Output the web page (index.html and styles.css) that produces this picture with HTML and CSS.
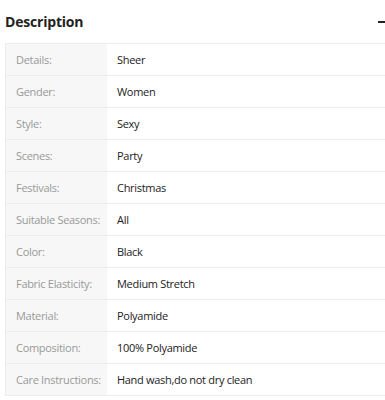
FILE: index.html
```html
<!DOCTYPE html>
<html>
<head>
    <meta charset="UTF-8">
    <meta name="viewport" content="width=device-width, initial-scale=1">
    <title>Description</title>
    <link rel="stylesheet" href="styles.css">
</head>
<body>
<div class="desc">
    <div class="desc-head">
        <h2>Description</h2>
        <span class="toggle"></span>
    </div>
    <table class="desc-table">
        <tr><td class="label">Details:</td><td>Sheer</td></tr>
        <tr><td class="label">Gender:</td><td>Women</td></tr>
        <tr><td class="label">Style:</td><td>Sexy</td></tr>
        <tr><td class="label">Scenes:</td><td>Party</td></tr>
        <tr><td class="label">Festivals:</td><td>Christmas</td></tr>
        <tr><td class="label">Suitable Seasons:</td><td>All</td></tr>
        <tr><td class="label">Color:</td><td>Black</td></tr>
        <tr><td class="label">Fabric Elasticity:</td><td>Medium Stretch</td></tr>
        <tr><td class="label">Material:</td><td>Polyamide</td></tr>
        <tr><td class="label">Composition:</td><td>100% Polyamide</td></tr>
        <tr><td class="label">Care Instructions:</td><td>Hand wash,do not dry clean</td></tr>
    </table>
</div>
</body>
</html>
```

FILE: styles.css
```css
body {
    margin: 0;
    background: #fff;
    font-family: "Open Sans", "Noto Sans", Arial, sans-serif;
    color: #333;
}

.desc {
    padding-left: 5px;
}

.desc-head {
    display: flex;
    justify-content: space-between;
    align-items: center;
    height: 43px;
}

.desc-head h2 {
    margin: 0;
    font-size: 14px;
    font-weight: bold;
    letter-spacing: -0.2px;
    color: #222;
}

.toggle {
    display: block;
    width: 7px;
    height: 2px;
    background: #222;
}

.desc-table {
    width: 100%;
    border-collapse: collapse;
    border-left: 1px solid #ececec;
    font-size: 11px;
    letter-spacing: -0.3px;
}

.desc-table td {
    height: 31px;
    padding: 0 10px;
    border-top: 1px solid #ececec;
    border-bottom: 1px solid #ececec;
    color: #222;
}

.desc-table td.label {
    width: 86px;
    padding-right: 5px;
    background: #f7f7f7;
    color: #999;
    white-space: nowrap;
}
```
